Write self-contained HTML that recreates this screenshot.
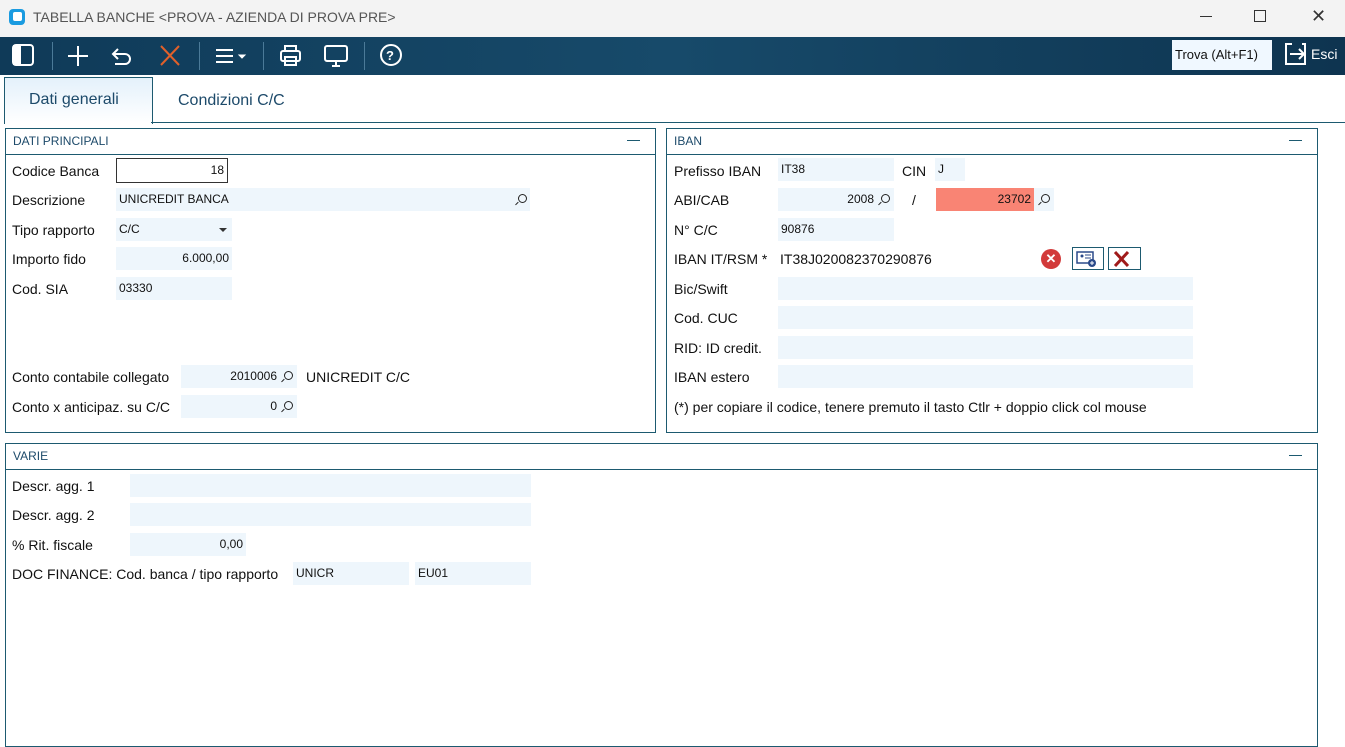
<!DOCTYPE html>
<html><head><style>
body{margin:0;width:1345px;height:747px;background:#fff;font-family:"Liberation Sans",sans-serif;position:relative;overflow:hidden;color:#111}
.a{position:absolute}
.lbl{position:absolute;font-size:14px;color:#111;white-space:nowrap}
.f{position:absolute;height:23px;background:#eef6fc;font-size:12px;line-height:23px;box-sizing:border-box;padding:0 3px;white-space:nowrap;color:#111}
.r{text-align:right}
.box{position:absolute;border:1px solid #1d5a70;box-sizing:border-box}
.hd{height:25px;border-bottom:1px solid #1d5a70;font-size:12px;color:#1d4a6a;line-height:25px;padding-left:7px;position:relative}
.hd:after{content:"";position:absolute;right:15px;top:11px;width:13px;height:1px;background:#1d5a70}
.mag{position:absolute;width:7px;height:7px;border:1.3px solid #222;border-radius:50%}
.mag:after{content:"";position:absolute;width:4px;height:1.3px;background:#222;left:-4px;top:8px;transform:rotate(-45deg)}
.sep{position:absolute;top:42px;width:1px;height:28px;background:#4b7a98}
</style></head><body>
<div class="a" style="left:0;top:0;width:1345px;height:37px;background:#f3f3f3"></div>
<div class="a" style="left:9px;top:9px;width:16px;height:16px;border-radius:4px;background:#1a9be0"></div>
<div class="a" style="left:13px;top:12px;width:9px;height:9px;border-radius:2px;background:#fff"></div>
<div class="lbl" style="left:33px;top:9px;font-size:14px;color:#555">TABELLA BANCHE &lt;PROVA - AZIENDA DI PROVA PRE&gt;</div>
<div class="a" style="left:1200px;top:16px;width:12px;height:1px;background:#333"></div>
<div class="a" style="left:1254px;top:10px;width:10px;height:10px;border:1px solid #333"></div>
<div class="lbl" style="left:1311px;top:6px;font-size:18px;color:#333">✕</div>

<div class="a" style="left:0;top:37px;width:1345px;height:38px;background:linear-gradient(90deg,#0f3a58,#174a6a 50%,#0e3450)"></div>
<svg class="a" style="left:0;top:37px" width="420" height="38" fill="none" stroke="#fff" stroke-width="2">
<rect x="13" y="8" width="20" height="20" rx="3"/><rect x="14" y="9" width="6" height="18" fill="#fff"/>
<path d="M78 9v20M68 19h20"/>
<path d="M118 12l-5 5 5 5M113 17h12a5 5 0 0 1 0 10h-10"/>
<path d="M161 9l18 19M179 9l-18 19" stroke="#e0602a"/>
<path d="M216 13h17M216 19h17M216 25h17"/><path d="M239 18l3 3 3-3z" fill="#fff" stroke-width="1"/>
<rect x="281" y="14" width="19" height="10" rx="2"/><rect x="285" y="9" width="11" height="5"/><rect x="285" y="20" width="11" height="8"/>
<rect x="325" y="9" width="22" height="15" rx="2"/><path d="M332 29h8M336 24v5"/>
<circle cx="391" cy="18" r="10"/><text x="386" y="23" font-size="13" fill="#fff" stroke="none" font-family="Liberation Sans" font-weight="bold">?</text>
</svg>
<div class="sep" style="left:52px"></div><div class="sep" style="left:199px"></div><div class="sep" style="left:263px"></div><div class="sep" style="left:364px"></div>
<div class="f" style="left:1172px;top:40px;width:100px;height:30px;line-height:30px;font-size:13px;background:#f0f8ff">Trova (Alt+F1)</div>
<svg class="a" style="left:1284px;top:42px" width="24" height="24" fill="none" stroke="#fff" stroke-width="2"><path d="M8 2H2v20h19V2h-3"/><path d="M6 12h14M15 7l5 5-5 5"/></svg>
<div class="lbl" style="left:1311px;top:46px;color:#fff;font-size:14px">Esci</div>

<div class="a" style="left:4px;top:77px;width:147px;height:46px;border:1px solid #1d5a70;border-bottom:none;background:linear-gradient(#e4f1fb,#fff)"></div>
<div class="a" style="left:151px;top:122px;width:1194px;height:1px;background:#1d5a70"></div>
<div class="lbl" style="left:29px;top:91px;font-size:16px;color:#1d4a6a">Dati generali</div>
<div class="lbl" style="left:178px;top:92px;font-size:16px;color:#1d4a6a">Condizioni C/C</div>

<div class="box" style="left:5px;top:128px;width:651px;height:305px"><div class="hd">DATI PRINCIPALI</div></div>
<div class="box" style="left:666px;top:128px;width:652px;height:305px"><div class="hd">IBAN</div></div>
<div class="box" style="left:5px;top:443px;width:1313px;height:304px"><div class="hd">VARIE</div></div>

<div class="lbl" style="left:12px;top:163px">Codice Banca</div>
<div class="f r" style="left:116px;top:158px;width:112px;height:25px;background:#fff;border:1px solid #333">18</div>
<div class="lbl" style="left:12px;top:192px">Descrizione</div>
<div class="f" style="left:116px;top:188px;width:414px">UNICREDIT BANCA</div><div class="mag" style="left:518px;top:194px"></div>
<div class="lbl" style="left:12px;top:222px">Tipo rapporto</div>
<div class="f" style="left:116px;top:218px;width:116px">C/C</div>
<div class="a" style="left:219px;top:228px;border:4px solid transparent;border-top:4px solid #333"></div>
<div class="lbl" style="left:12px;top:251px">Importo fido</div>
<div class="f r" style="left:116px;top:247px;width:116px">6.000,00</div>
<div class="lbl" style="left:12px;top:281px">Cod. SIA</div>
<div class="f" style="left:116px;top:277px;width:116px">03330</div>
<div class="lbl" style="left:12px;top:369px">Conto contabile collegato</div>
<div class="f r" style="left:181px;top:365px;width:116px;padding-right:20px">2010006</div><div class="mag" style="left:284px;top:371px"></div>
<div class="lbl" style="left:306px;top:369px">UNICREDIT C/C</div>
<div class="lbl" style="left:12px;top:399px">Conto x anticipaz. su C/C</div>
<div class="f r" style="left:181px;top:395px;width:116px;padding-right:20px">0</div><div class="mag" style="left:284px;top:401px"></div>

<div class="lbl" style="left:674px;top:163px">Prefisso IBAN</div>
<div class="f" style="left:778px;top:158px;width:116px">IT38</div>
<div class="lbl" style="left:902px;top:163px">CIN</div>
<div class="f" style="left:935px;top:158px;width:30px">J</div>
<div class="lbl" style="left:674px;top:192px">ABI/CAB</div>
<div class="f r" style="left:778px;top:188px;width:116px;padding-right:20px">2008</div><div class="mag" style="left:881px;top:194px"></div>
<div class="lbl" style="left:912px;top:192px">/</div>
<div class="f r" style="left:936px;top:188px;width:98px;background:#f98474">23702</div>
<div class="f" style="left:1034px;top:188px;width:20px"></div><div class="mag" style="left:1041px;top:194px"></div>
<div class="lbl" style="left:674px;top:222px">N° C/C</div>
<div class="f" style="left:778px;top:218px;width:116px">90876</div>
<div class="lbl" style="left:674px;top:251px">IBAN IT/RSM *</div>
<div class="lbl" style="left:780px;top:251px">IT38J020082370290876</div>
<div class="a" style="left:1041px;top:249px;width:20px;height:20px;border-radius:50%;background:#d23a3a;color:#fff;font-size:13px;line-height:20px;text-align:center;font-weight:bold">✕</div>
<div class="a" style="left:1072px;top:247px;width:32px;height:23px;border:1px solid #1d5a70;box-sizing:border-box"></div>
<svg class="a" style="left:1076px;top:250px" width="26" height="18"><rect x="1" y="2" width="16" height="11" fill="none" stroke="#2b4a8a" stroke-width="1.5"/><circle cx="6" cy="6" r="1.5" fill="#2b4a8a"/><path d="M9 5h6M9 8h6" stroke="#2b4a8a"/><circle cx="16" cy="13" r="4" fill="#2b4a8a"/><path d="M14 13h4M16 11v4" stroke="#fff"/></svg>
<div class="a" style="left:1108px;top:247px;width:33px;height:23px;border:1px solid #1d5a70;box-sizing:border-box"></div>
<svg class="a" style="left:1113px;top:250px" width="20" height="18"><path d="M2 2l13 14M15 2L2 16" stroke="#a01a1a" stroke-width="3"/></svg>
<div class="lbl" style="left:674px;top:281px">Bic/Swift</div><div class="f" style="left:778px;top:277px;width:415px"></div>
<div class="lbl" style="left:674px;top:310px">Cod. CUC</div><div class="f" style="left:778px;top:306px;width:415px"></div>
<div class="lbl" style="left:674px;top:340px">RID: ID credit.</div><div class="f" style="left:778px;top:336px;width:415px"></div>
<div class="lbl" style="left:674px;top:369px">IBAN estero</div><div class="f" style="left:778px;top:365px;width:415px"></div>
<div class="lbl" style="left:674px;top:399px">(*) per copiare il codice, tenere premuto il tasto Ctlr + doppio click col mouse</div>

<div class="lbl" style="left:12px;top:478px">Descr. agg. 1</div><div class="f" style="left:130px;top:474px;width:401px"></div>
<div class="lbl" style="left:12px;top:507px">Descr. agg. 2</div><div class="f" style="left:130px;top:503px;width:401px"></div>
<div class="lbl" style="left:12px;top:537px">% Rit. fiscale</div><div class="f r" style="left:130px;top:533px;width:116px">0,00</div>
<div class="lbl" style="left:12px;top:566px">DOC FINANCE: Cod. banca / tipo rapporto</div>
<div class="f" style="left:293px;top:562px;width:116px">UNICR</div>
<div class="f" style="left:415px;top:562px;width:116px">EU01</div>
</body></html>
